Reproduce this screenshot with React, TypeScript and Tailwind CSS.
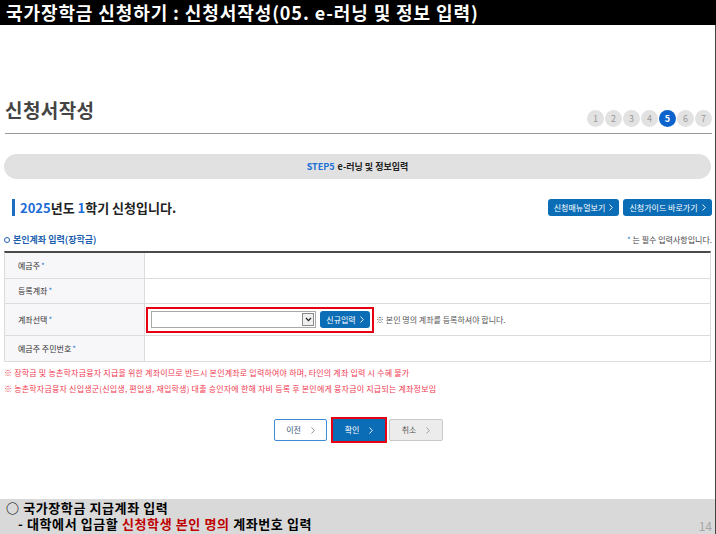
const FONT = { fontFamily: '"Noto Sans CJK KR", "Noto Sans", sans-serif' }

function Chev({ className = "" }: { className?: string }) {
  return (
    <svg width="4" height="7" viewBox="0 0 4 7" className={className}>
      <path d="M0.5 0.5 L3.3 3.5 L0.5 6.5" fill="none" stroke="currentColor" strokeWidth="0.9" />
    </svg>
  )
}

function Req({ label }: { label: string }) {
  return (
    <div className="pl-[13px] flex items-center text-[8px] text-[#333]">
      {label}
      <span className="ml-[1px] text-[#2a78d2]">*</span>
    </div>
  )
}

export default function App() {
  const steps = [1, 2, 3, 4, 5, 6, 7]
  return (
    <div className="w-[716px] h-[534px] bg-white flex flex-col overflow-hidden" style={FONT}>
      {/* 상단 제목 */}
      <div className="h-[25px] bg-black text-white font-bold text-[18px] tracking-[0.9px] leading-[25px] pl-[6px] whitespace-nowrap">
        국가장학금 신청하기 : 신청서작성(05. e-러닝 및 정보 입력)
      </div>

      <div className="flex-1 flex flex-col border-r border-[#444]">
        <div className="flex flex-col pl-[4px] pr-[3px]">
          {/* 타이틀 + 단계 */}
          <div className="mt-[71px] h-[38px] flex justify-between items-start border-b border-[#9a9a9a] ml-[1px]">
            <h1 className="mt-[1px] text-[19px] tracking-[0.4px] leading-[26px] font-bold text-[#444]">신청서작성</h1>
            <div className="mt-[14px] flex gap-[1px]">
              {steps.map((s) => (
                <div
                  key={s}
                  className={`w-[17px] h-[17px] rounded-full flex items-center justify-center text-[9px] ${s === 5 ? "bg-[#0c63cc] text-white font-bold" : "bg-[#e2e2e2] text-[#9a9a9a]"}`}
                >
                  {s}
                </div>
              ))}
            </div>
          </div>

          {/* STEP 배너 */}
          <div className="mt-[20px] h-[25px] mr-[1px] rounded-full bg-[#e1e1e1] flex items-center justify-center text-[9px] font-bold text-[#222]">
            <span className="text-[#1b6fd6] mr-[3px]">STEP5</span>e-러닝 및 정보입력
          </div>

          {/* 신청 학기 */}
          <div className="mt-[20px] h-[17px] flex items-center justify-between">
            <div className="flex items-center ml-[8px]">
              <div className="w-[3px] h-[17px] bg-[#1b6ec2]" />
              <div className="ml-[5px] text-[13px] font-bold text-[#222] leading-[17px]">
                <span className="text-[#1d6ed6]">2025</span>년도 <span className="text-[#1d6ed6]">1</span>학기 신청입니다.
              </div>
            </div>
            <div className="flex gap-[4px]">
              <button className="h-[17px] w-[71px] rounded-[3px] bg-[#0a6db6] text-white text-[8px] flex items-center justify-center gap-[4px]">
                신청매뉴얼보기 <Chev />
              </button>
              <button className="h-[17px] w-[89px] rounded-[3px] bg-[#0a6db6] text-white text-[8px] flex items-center justify-center gap-[4px]">
                신청가이드 바로가기 <Chev />
              </button>
            </div>
          </div>

          {/* 본인계좌 입력 */}
          <div className="mt-[16px] h-[16px] flex items-center justify-between">
            <div className="flex items-center text-[9px] font-bold text-[#1d5fae]">
              <span className="w-[6px] h-[6px] rounded-full border-[1.5px] border-[#1d5fae] mr-[3px]" />
              본인계좌 입력(장학금)
            </div>
            <div className="text-[8px] text-[#444]">
              <span className="text-[#2a78d2]">*</span> 는 필수 입력사항입니다.
            </div>
          </div>

          <div className="mt-[3px] border-t-2 border-[#4a4a4a] border-x border-x-[#dcdcdc] grid grid-cols-[140px_1fr] mr-[1px]">
            <div className="h-[26px] bg-[#f7f7f9] border-r border-b border-[#dcdcdc] flex items-center">
              <Req label="예금주" />
            </div>
            <div className="h-[26px] border-b border-[#dcdcdc]" />

            <div className="h-[25px] bg-[#f7f7f9] border-r border-b border-[#dcdcdc] flex items-center">
              <Req label="등록계좌" />
            </div>
            <div className="h-[25px] border-b border-[#dcdcdc]" />

            <div className="h-[32px] bg-[#f7f7f9] border-r border-b border-[#dcdcdc] flex items-center">
              <Req label="계좌선택" />
            </div>
            <div className="h-[32px] border-b border-[#dcdcdc] flex items-center">
              <div className="ml-[1px] h-[26px] w-[228px] border-2 border-[#e60012] flex items-center pl-[3px]">
                <div className="w-[165px] h-[17px] border border-[#a9a9a9] bg-white flex justify-end items-center pr-[1px]">
                  <div className="w-[12px] h-[13px] border border-[#8a8a8a] bg-[#f0f0f0] flex items-center justify-center">
                    <svg width="7" height="5" viewBox="0 0 7 5">
                      <path d="M1 1 L3.5 3.6 L6 1" fill="none" stroke="#222" strokeWidth="1.2" />
                    </svg>
                  </div>
                </div>
                <button className="ml-[4px] h-[17px] w-[50px] rounded-[3px] bg-[#0a6db6] text-white text-[8px] flex items-center justify-center gap-[4px]">
                  신규입력 <Chev />
                </button>
              </div>
              <span className="ml-[2px] text-[8px] text-[#555]">※ 본인 명의 계좌를 등록하셔야 합니다.</span>
            </div>

            <div className="h-[26px] bg-[#f7f7f9] border-r border-b border-[#dcdcdc] flex items-center">
              <Req label="예금주 주민번호" />
            </div>
            <div className="h-[26px] border-b border-[#dcdcdc]" />
          </div>

          {/* 안내 문구 */}
          <div className="mt-[3px] text-[8px] tracking-[0.2px] leading-[16px] text-[#f0394f]">
            <p>※ 장학금 및 농촌학자금융자 지급을 위한 계좌이므로 반드시 본인계좌로 입력하여야 하며, 타인의 계좌 입력 시 수혜 불가</p>
            <p>※ 농촌학자금융자 신입생군(신입생, 편입생, 재입학생) 대출 승인자에 한해 자비 등록 후 본인에게 융자금이 지급되는 계좌정보임</p>
          </div>

          {/* 버튼 */}
          <div className="mt-[20px] flex justify-center items-center ml-[1px]">
            <button className="h-[22px] w-[53px] rounded-[2px] border border-[#3d8bd4] bg-white text-[8px] text-[#3a5a7a] flex items-center justify-center gap-[10px]">
              이전 <Chev className="text-[#888]" />
            </button>
            <div className="ml-[4px] border-2 border-[#e60012]">
              <button className="h-[22px] w-[52px] bg-[#0a6db6] text-white text-[8px] flex items-center justify-center gap-[10px]">
                확인 <Chev />
              </button>
            </div>
            <button className="ml-[2px] h-[22px] w-[54px] rounded-[2px] border border-[#c9c9c9] bg-[#ececec] text-[8px] text-[#555] flex items-center justify-center gap-[10px]">
              취소 <Chev className="text-[#999]" />
            </button>
          </div>
        </div>

        {/* 하단 설명 */}
        <div className="mt-auto h-[35px] bg-[#d9d9d9] pl-[6px] text-[13px] tracking-[0.6px] font-bold text-black leading-[16px] overflow-hidden">
          <div className="h-[17px] leading-[17px]">○ 국가장학금 지급계좌 입력</div>
          <div className="h-[16px] flex justify-between">
            <div className="pl-[12px]">
              - 대학에서 입금할 <span className="text-[#c00000]">신청학생 본인 명의</span> 계좌번호 입력
            </div>
            <span className="mr-[3px] mt-[2px] text-[12px] tracking-normal font-normal text-[#a6a6a6]">14</span>
          </div>
        </div>
      </div>
    </div>
  )
}
